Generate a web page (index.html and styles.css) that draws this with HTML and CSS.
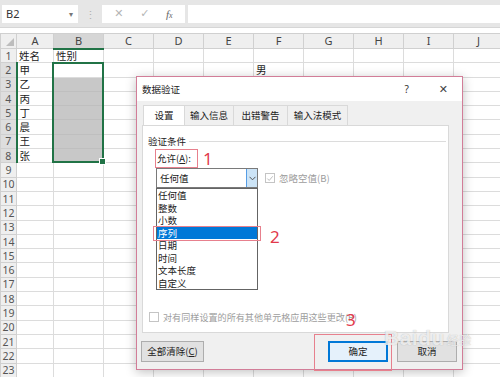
FILE: index.html
```html
<!DOCTYPE html>
<html lang="zh-CN">
<head>
    <meta charset="UTF-8">
    <title>数据验证</title>
    <link rel="stylesheet" href="styles.css">
</head>
<body>
    <!-- Formula bar -->
    <div class="topbar">
        <div class="namebox"><span>B2</span><span class="nb-arrow">▾</span></div>
        <div class="grip">⋮</div>
        <div class="fxbox">
            <span class="fx-btn">✕</span>
            <span class="fx-btn">✓</span>
            <span class="fx-btn fx"><i>f</i><i class="sub">x</i></span>
        </div>
        <div class="formula"></div>
    </div>

    <!-- Sheet -->
    <div class="sheet-wrap">
        <table class="sheet">
            <colgroup>
                <col class="c-rh"><col class="c-a"><col><col><col><col><col><col><col><col><col>
            </colgroup>
            <thead>
                <tr><th class="corner"></th><th>A</th><th class="hl">B</th><th>C</th><th>D</th><th>E</th><th>F</th><th>G</th><th>H</th><th>I</th><th>J</th></tr>
            </thead>
            <tbody>
                <tr><th>1</th><td>姓名</td><td>性别</td><td></td><td></td><td></td><td></td><td></td><td></td><td></td><td></td></tr>
                <tr><th class="hl">2</th><td>甲</td><td></td><td></td><td></td><td></td><td>男</td><td></td><td></td><td></td><td></td></tr>
                <tr><th class="hl">3</th><td>乙</td><td class="fill"></td><td></td><td></td><td></td><td></td><td></td><td></td><td></td><td></td></tr>
                <tr><th class="hl">4</th><td>丙</td><td class="fill"></td><td></td><td></td><td></td><td></td><td></td><td></td><td></td><td></td></tr>
                <tr><th class="hl">5</th><td>丁</td><td class="fill"></td><td></td><td></td><td></td><td></td><td></td><td></td><td></td><td></td></tr>
                <tr><th class="hl">6</th><td>晨</td><td class="fill"></td><td></td><td></td><td></td><td></td><td></td><td></td><td></td><td></td></tr>
                <tr><th class="hl">7</th><td>王</td><td class="fill"></td><td></td><td></td><td></td><td></td><td></td><td></td><td></td><td></td></tr>
                <tr><th class="hl">8</th><td>张</td><td class="fill"></td><td></td><td></td><td></td><td></td><td></td><td></td><td></td><td></td></tr>
                <tr><th>9</th><td></td><td></td><td></td><td></td><td></td><td></td><td></td><td></td><td></td><td></td></tr>
                <tr><th>10</th><td></td><td></td><td></td><td></td><td></td><td></td><td></td><td></td><td></td><td></td></tr>
                <tr><th>11</th><td></td><td></td><td></td><td></td><td></td><td></td><td></td><td></td><td></td><td></td></tr>
                <tr><th>12</th><td></td><td></td><td></td><td></td><td></td><td></td><td></td><td></td><td></td><td></td></tr>
                <tr><th>13</th><td></td><td></td><td></td><td></td><td></td><td></td><td></td><td></td><td></td><td></td></tr>
                <tr><th>14</th><td></td><td></td><td></td><td></td><td></td><td></td><td></td><td></td><td></td><td></td></tr>
                <tr><th>15</th><td></td><td></td><td></td><td></td><td></td><td></td><td></td><td></td><td></td><td></td></tr>
                <tr><th>16</th><td></td><td></td><td></td><td></td><td></td><td></td><td></td><td></td><td></td><td></td></tr>
                <tr><th>17</th><td></td><td></td><td></td><td></td><td></td><td></td><td></td><td></td><td></td><td></td></tr>
                <tr><th>18</th><td></td><td></td><td></td><td></td><td></td><td></td><td></td><td></td><td></td><td></td></tr>
                <tr><th>19</th><td></td><td></td><td></td><td></td><td></td><td></td><td></td><td></td><td></td><td></td></tr>
                <tr><th>20</th><td></td><td></td><td></td><td></td><td></td><td></td><td></td><td></td><td></td><td></td></tr>
                <tr><th>21</th><td></td><td></td><td></td><td></td><td></td><td></td><td></td><td></td><td></td><td></td></tr>
                <tr><th>22</th><td></td><td></td><td></td><td></td><td></td><td></td><td></td><td></td><td></td><td></td></tr>
                <tr><th>23</th><td></td><td></td><td></td><td></td><td></td><td></td><td></td><td></td><td></td><td></td></tr>
            </tbody>
        </table>
        <div class="selection"><span class="handle"></span></div>
    </div>

    <!-- Data validation dialog -->
    <div class="dialog">
        <div class="dlg-title">
            <span>数据验证</span>
            <span class="help">?</span>
            <span class="close">✕</span>
        </div>
        <div class="tabs">
            <div class="tab active t1">设置</div>
            <div class="tab t2">输入信息</div>
            <div class="tab t3">出错警告</div>
            <div class="tab t4">输入法模式</div>
        </div>
        <div class="panel">
            <div class="group-title">验证条件</div>
            <div class="field-label">允许(<u>A</u>):</div>
            <div class="field-row">
                <div class="combo">
                    <span class="combo-text">任何值</span>
                    <span class="combo-btn">
                        <svg width="7" height="5" viewBox="0 0 7 5"><path d="M0.5 0.8 L3.5 3.8 L6.5 0.8" fill="none" stroke="#555" stroke-width="1"/></svg>
                    </span>
                    <ul class="dropdown">
                        <li>任何值</li>
                        <li>整数</li>
                        <li>小数</li>
                        <li class="picked">序列</li>
                        <li>日期</li>
                        <li>时间</li>
                        <li>文本长度</li>
                        <li>自定义</li>
                    </ul>
                </div>
                <label class="check disabled">
                    <span class="box">
                        <svg width="9" height="9" viewBox="0 0 9 9"><path d="M1.5 4.6 L3.6 6.7 L7.6 2" fill="none" stroke="#bbb" stroke-width="1.1"/></svg>
                    </span>
                    <span>忽略空值(B)</span>
                </label>
            </div>
            <label class="check apply-all">
                <span class="box"></span>
                <span>对有同样设置的所有其他单元格应用这些更改(P)</span>
            </label>
        </div>
        <div class="foot">
            <button class="btn">全部清除(<u>C</u>)</button>
            <button class="btn primary">确定</button>
            <button class="btn">取消</button>
        </div>
    </div>

    <!-- Hand drawn marks -->
    <div class="mark box-allow"></div>
    <div class="mark num n1">1</div>
    <div class="mark box-seq"></div>
    <div class="mark num n2">2</div>
    <div class="mark num n3">3</div>
    <div class="mark box-ok"></div>

    <div class="watermark">Bai<b>du</b><span>经验</span></div>
</body>
</html>
```

FILE: styles.css
```css
body {
    margin: 0;
    width: 500px;
    height: 377px;
    overflow: hidden;
    position: relative;
    background: #fff;
    font-family: "Noto Sans CJK SC", "Noto Sans", sans-serif;
    color: #222;
}

/* formula bar */
.topbar {
    height: 27px;
    background: #e6e6e6;
    border-bottom: 1px solid #d6d6d6;
    display: flex;
    align-items: center;
    margin-bottom: 5px;
}
.namebox {
    margin-left: 2px;
    width: 76px;
    height: 18px;
    box-sizing: border-box;
    background: #fff;
    display: flex;
    align-items: center;
    padding: 0 5px 0 4px;
    font: 11px "Noto Sans", sans-serif;
    color: #333;
}
.nb-arrow {
    margin-left: auto;
    font-size: 8px;
    color: #777;
}
.grip {
    width: 24px;
    text-align: center;
    color: #b0b0b0;
    font-size: 11px;
}
.fxbox {
    width: 83px;
    height: 18px;
    background: #fff;
    display: flex;
    align-items: center;
    justify-content: space-around;
    padding: 0 4px;
    box-sizing: border-box;
}
.fx-btn {
    color: #b5b5b5;
    font: 11px "DejaVu Sans", sans-serif;
}
.fx-btn.fx {
    color: #666;
    font: italic 11px "Liberation Serif", serif;
}
.fx-btn .sub {
    font-size: 8px;
}
.formula {
    flex: 1;
    height: 18px;
    margin-left: 3px;
    background: #fff;
}

/* sheet */
.sheet-wrap {
    position: relative;
}
.sheet {
    border-collapse: collapse;
    table-layout: fixed;
    width: 503px;
}
.sheet col {
    width: 50px;
}
.sheet col.c-rh {
    width: 16px;
}
.sheet col.c-a {
    width: 37px;
}
.sheet tr {
    height: 14.3px;
}
.sheet td, .sheet th {
    border: 1px solid #dcdcdc;
    padding: 0 2px;
    font-size: 10.5px;
    line-height: 12px;
    white-space: nowrap;
    overflow: hidden;
    text-align: left;
    font-weight: normal;
}
.sheet thead tr {
    height: 15px;
}
.sheet thead th {
    background: #efefef;
    border-color: #d0d0d0;
    text-align: center;
    font: 11px/12px "Noto Sans", sans-serif;
    color: #444;
}
.sheet thead th.hl {
    background: #d6d6d6;
    border-bottom: 2px solid #217346;
}
.sheet tbody th {
    background: #efefef;
    border-color: #d0d0d0;
    text-align: center;
    padding: 0;
    font: 10.5px/12px "Noto Sans", sans-serif;
    color: #555;
}
.sheet tbody th.hl {
    background: #dedede;
    border-right: 2px solid #217346;
}
.sheet th.corner {
    position: relative;
}
.sheet th.corner::after {
    content: "";
    position: absolute;
    right: 2px;
    bottom: 2px;
    border-left: 8px solid transparent;
    border-bottom: 8px solid #bdbdbd;
}
.sheet td.fill {
    background: #c8c8c8;
    border-color: #bfbfbf;
}
.selection {
    position: absolute;
    left: 52px;
    top: 29px;
    width: 52px;
    height: 101px;
    box-sizing: border-box;
    border: 2px solid #217346;
}
.selection .handle {
    position: absolute;
    right: -4px;
    bottom: -4px;
    width: 5px;
    height: 5px;
    background: #217346;
    border: 1px solid #fff;
}

/* dialog */
.dialog {
    position: absolute;
    left: 136px;
    top: 76px;
    width: 327px;
    height: 294px;
    box-sizing: border-box;
    border: 1px solid #d27d98;
    background: #f0f0f0;
    box-shadow: 0 2px 10px rgba(0, 0, 0, 0.25);
    display: flex;
    flex-direction: column;
    font-size: 9.5px;
}
.dlg-title {
    height: 24px;
    background: #fff;
    display: flex;
    align-items: center;
    padding-left: 5px;
}
.dlg-title .help {
    margin-left: auto;
    margin-right: 30px;
    font: 10px "Noto Sans", sans-serif;
    color: #333;
}
.dlg-title .close {
    margin-right: 14px;
    font: 11px "DejaVu Sans", sans-serif;
    color: #444;
}
.tabs {
    display: flex;
    padding: 4px 0 0 6px;
}
.tab {
    height: 20px;
    box-sizing: border-box;
    border: 1px solid #d9d9d9;
    border-bottom: none;
    border-left: none;
    line-height: 19px;
    text-align: center;
    background: #f0f0f0;
    color: #222;
}
.tab.active {
    background: #fff;
    border-left: 1px solid #d9d9d9;
}
.t1 { width: 42px; }
.t2 { width: 49px; }
.t3 { width: 54px; }
.t4 { width: 60px; }
.panel {
    margin: 0 13px 0 5px;
    height: 208px;
    box-sizing: border-box;
    background: #fff;
    border: 1px solid #d9d9d9;
    display: flex;
    flex-direction: column;
}
.group-title {
    margin: 8px 2px 0 5px;
    line-height: 14px;
    display: flex;
    align-items: center;
    gap: 3px;
}
.group-title::after {
    content: "";
    flex: 1;
    height: 1px;
    background: #dcdcdc;
}
.field-label {
    margin: 3px 0 0 14px;
    line-height: 14px;
}
.field-row {
    margin: 3px 0 0 13px;
    display: flex;
    align-items: center;
}
.combo {
    position: relative;
    width: 102px;
    height: 20px;
    box-sizing: border-box;
    border: 1px solid #7a7a7a;
    display: flex;
    align-items: center;
    background: #fff;
}
.combo-text {
    padding-left: 3px;
    flex: 1;
}
.combo-btn {
    width: 11px;
    height: 18px;
    box-sizing: border-box;
    background: #cce4f7;
    border-left: 1px solid #569de5;
    display: flex;
    align-items: center;
    justify-content: center;
}
.dropdown {
    position: absolute;
    left: -1px;
    top: 19px;
    width: 102px;
    margin: 0;
    padding: 0;
    list-style: none;
    background: #fff;
    border: 1px solid #646464;
    box-sizing: border-box;
}
.dropdown li {
    height: 12.5px;
    line-height: 12.5px;
    padding-left: 1px;
}
.dropdown li.picked {
    background: #0078d7;
    color: #fff;
}
.check {
    display: flex;
    align-items: center;
    gap: 4px;
}
.check .box {
    width: 10px;
    height: 10px;
    box-sizing: border-box;
    border: 1px solid #333;
    background: #fff;
    display: flex;
    align-items: center;
    justify-content: center;
}
.check.disabled {
    margin-left: 7px;
    color: #9d9d9d;
}
.check.disabled .box {
    border-color: #c4c4c4;
}
.apply-all {
    margin: auto 0 8px 6px;
    color: #9d9d9d;
    font-size: 9.1px;
}
.apply-all .box {
    border-color: #c4c4c4;
}
.foot {
    flex: 1;
    display: flex;
    align-items: center;
    gap: 9px;
    padding: 0 5px 0 4px;
}
.btn {
    width: 60px;
    height: 21px;
    background: #e1e1e1;
    border: 1px solid #adadad;
    font: 9.5px "Noto Sans CJK SC", sans-serif;
    color: #222;
    padding: 0;
}
.btn:first-child {
    width: 63px;
    margin-right: auto;
}
.btn.primary {
    background: #e5f1fb;
    border: 2px solid #0078d7;
}

/* annotation marks */
.mark {
    position: absolute;
}
.mark.num {
    color: #e23a4c;
    font: 17px "Noto Sans", sans-serif;
    line-height: 17px;
}
.n1 { left: 203px; top: 150px; }
.n2 { left: 270px; top: 228px; }
.n3 { left: 346px; top: 311px; font-weight: bold; }
.box-allow {
    left: 155px;
    top: 149px;
    width: 41px;
    height: 17px;
    border: 1px solid #e7808d;
}
.box-seq {
    left: 153px;
    top: 226px;
    width: 106px;
    height: 13px;
    border: 1px solid #e7808d;
}
.box-ok {
    left: 314px;
    top: 334px;
    width: 76px;
    height: 35px;
    border: 1px solid #e7808d;
}
.watermark {
    position: absolute;
    left: 384px;
    top: 326px;
    font: bold 21px "Liberation Sans", sans-serif;
    color: rgba(255, 255, 255, 0.75);
    text-shadow: 0 0 1px rgba(90, 90, 90, 0.45);
    letter-spacing: 0.5px;
}
.watermark span {
    font: 12px "Noto Sans CJK SC", sans-serif;
    margin-left: 2px;
}
```
